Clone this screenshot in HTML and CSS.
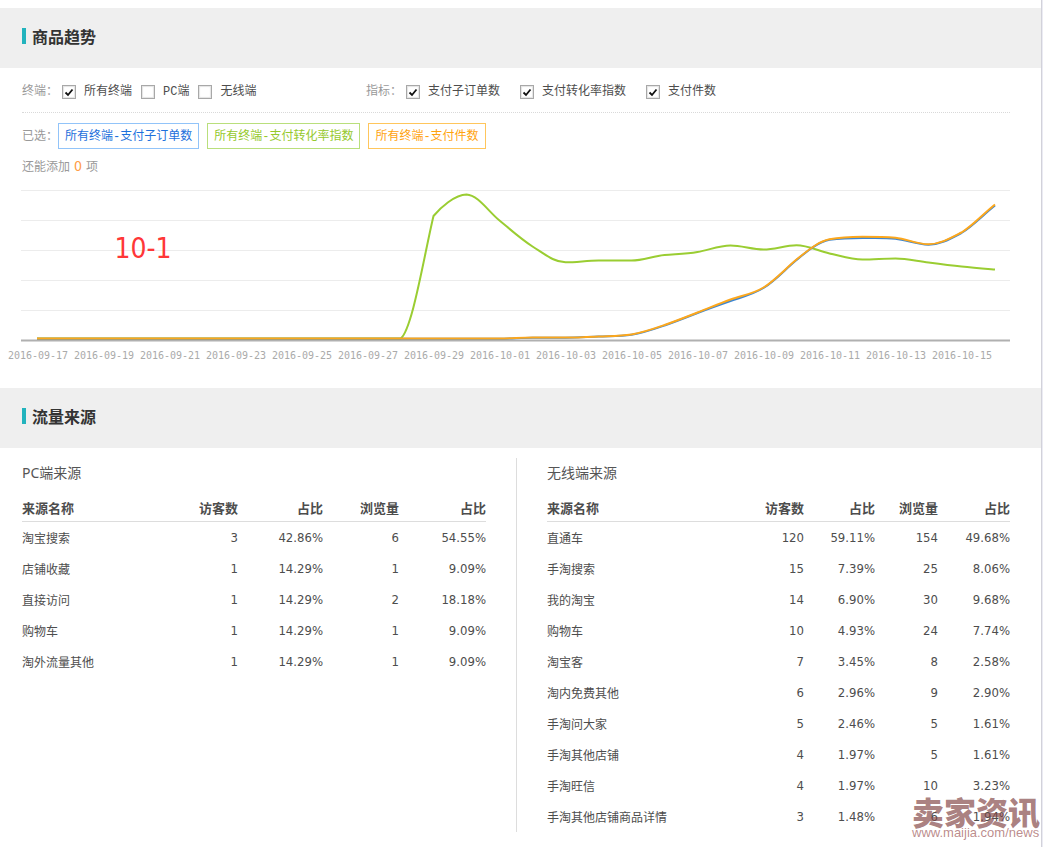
FILE: index.html
```html
<!DOCTYPE html>
<html lang="zh-CN">
<head>
<meta charset="utf-8">
<title>商品趋势</title>
<link rel="stylesheet" href="styles.css">
</head>
<body>
<main class="page">
  <section class="trend">
    <header class="section-head"><h2 class="section-title">商品趋势</h2></header>
    <div class="filters">
      <div class="filter-row">
        <fieldset class="group group-terminal">
          <legend class="group-label">终端：</legend>
          <label class="check"><input type="checkbox" checked>所有终端</label>
          <label class="check"><input type="checkbox">PC端</label>
          <label class="check"><input type="checkbox">无线端</label>
        </fieldset>
        <fieldset class="group group-metric">
          <legend class="group-label">指标：</legend>
          <label class="check"><input type="checkbox" checked>支付子订单数</label>
          <label class="check"><input type="checkbox" checked>支付转化率指数</label>
          <label class="check"><input type="checkbox" checked>支付件数</label>
        </fieldset>
      </div>
      <div class="selected-row">
        <span class="selected-label">已选：</span>
        <div class="tags">
          <span class="tag tag-blue">所有终端-支付子订单数</span>
          <span class="tag tag-green">所有终端-支付转化率指数</span>
          <span class="tag tag-orange">所有终端-支付件数</span>
        </div>
      </div>
      <p class="remaining">还能添加<span class="count">0</span>项</p>
    </div>
    <svg class="chart" viewBox="0 185 1041 183" role="img" aria-label="商品趋势图">
      <path class="grid" d="M21 190.500H1010M21 220.500H1010M21 250.500H1010M21 280.500H1010M21 310.500H1010"/>
      <path class="axis" d="M21 340.500H1010"/>
      <path class="line line-green" d="M37 338.500H400.500C412 331 424 256 433.500 216C440 208 455 194.500 466.500 194.500C478 195 488 211 499.500 220.500C511 230 521 239 532.500 246.500C546 255 554 262 565.500 262.300C577 262.300 587 260.500 598.500 260.500H631.500C643 260.500 653 256 664.500 255C676 254 686 254 697.500 252C709 250 719 245.500 730.500 245.500C742 245.500 752 249.500 763.500 249.500C775 249.500 785 245.300 796.500 245.300C808 245.300 818 251 829.500 253.500C841 256 851 259.500 862.500 259.500C874 259.500 884 258.500 895.500 258.500C907 258.500 917 261.200 928.500 262.500C940 264 950 265.300 961.500 266.500C973 267.700 983 268.500 995 269.500"/>
      <path class="line line-blue" d="M37 338.700H499.500C511 338.700 521 337.700 532.500 337.700H565.500C577 337.700 587 337 598.500 336.600C610 336 620 336.500 631.500 334.700C643 333 653 329.500 664.500 325.500C676 321.500 686 317.500 697.500 313C709 308.500 719 305 730.500 301C742 297 752 295 763.500 288C775 281 785 269.500 796.500 260C808 250.500 818 242 829.500 239.800C841 238.300 851 238 862.500 238C874 238 884 237.500 895.500 238.700C907 240 917 244.700 928.500 244.700C940 244.700 950 239 961.500 233C973 226 983 215 995 205.500"/>
      <path class="line line-orange" d="M37 338.500H499.500C511 338.500 521 337.500 532.500 337.500H565.500C577 337.500 587 337 598.500 336.500C610 336 620 336.300 631.500 334.500C643 332.500 653 329 664.500 325C676 321 686 317 697.500 312.500C709 308 719 303.700 730.500 299.500C742 295.300 752 294.500 763.500 287.500C775 280.500 785 269 796.500 259.500C808 250.500 818 241.500 829.500 239.300C841 237 851 236.700 862.500 236.700C874 236.700 884 236.700 895.500 237.700C907 239 917 244.300 928.500 244.300C940 244.300 950 238.500 961.500 232.500C973 225.500 983 214 995 204.500"/>
      <g class="dates">
        <text x="38" y="359">2016-09-17</text>
        <text x="104" y="359">2016-09-19</text>
        <text x="170" y="359">2016-09-21</text>
        <text x="236" y="359">2016-09-23</text>
        <text x="302" y="359">2016-09-25</text>
        <text x="368" y="359">2016-09-27</text>
        <text x="434" y="359">2016-09-29</text>
        <text x="500" y="359">2016-10-01</text>
        <text x="566" y="359">2016-10-03</text>
        <text x="632" y="359">2016-10-05</text>
        <text x="698" y="359">2016-10-07</text>
        <text x="764" y="359">2016-10-09</text>
        <text x="830" y="359">2016-10-11</text>
        <text x="896" y="359">2016-10-13</text>
        <text x="962" y="359">2016-10-15</text>
      </g>
      <text class="note" x="143" y="258">10-1</text>
    </svg>
  </section>

  <section class="sources">
    <header class="section-head"><h2 class="section-title">流量来源</h2></header>
    <div class="columns">
      <div class="column column-pc">
        <h3 class="column-title">PC端来源</h3>
        <table class="table">
          <colgroup><col><col class="w-visitors"><col class="w-share"><col class="w-views"><col class="w-last"></colgroup>
          <thead><tr><th>来源名称</th><th>访客数</th><th>占比</th><th>浏览量</th><th>占比</th></tr></thead>
          <tbody>
            <tr><td>淘宝搜索</td><td>3</td><td>42.86%</td><td>6</td><td>54.55%</td></tr>
            <tr><td>店铺收藏</td><td>1</td><td>14.29%</td><td>1</td><td>9.09%</td></tr>
            <tr><td>直接访问</td><td>1</td><td>14.29%</td><td>2</td><td>18.18%</td></tr>
            <tr><td>购物车</td><td>1</td><td>14.29%</td><td>1</td><td>9.09%</td></tr>
            <tr><td>淘外流量其他</td><td>1</td><td>14.29%</td><td>1</td><td>9.09%</td></tr>
          </tbody>
        </table>
      </div>
      <div class="column column-mobile">
        <h3 class="column-title">无线端来源</h3>
        <table class="table">
          <colgroup><col><col class="w-visitors"><col class="w-share"><col class="w-views"><col class="w-last"></colgroup>
          <thead><tr><th>来源名称</th><th>访客数</th><th>占比</th><th>浏览量</th><th>占比</th></tr></thead>
          <tbody>
            <tr><td>直通车</td><td>120</td><td>59.11%</td><td>154</td><td>49.68%</td></tr>
            <tr><td>手淘搜索</td><td>15</td><td>7.39%</td><td>25</td><td>8.06%</td></tr>
            <tr><td>我的淘宝</td><td>14</td><td>6.90%</td><td>30</td><td>9.68%</td></tr>
            <tr><td>购物车</td><td>10</td><td>4.93%</td><td>24</td><td>7.74%</td></tr>
            <tr><td>淘宝客</td><td>7</td><td>3.45%</td><td>8</td><td>2.58%</td></tr>
            <tr><td>淘内免费其他</td><td>6</td><td>2.96%</td><td>9</td><td>2.90%</td></tr>
            <tr><td>手淘问大家</td><td>5</td><td>2.46%</td><td>5</td><td>1.61%</td></tr>
            <tr><td>手淘其他店铺</td><td>4</td><td>1.97%</td><td>5</td><td>1.61%</td></tr>
            <tr><td>手淘旺信</td><td>4</td><td>1.97%</td><td>10</td><td>3.23%</td></tr>
            <tr><td>手淘其他店铺商品详情</td><td>3</td><td>1.48%</td><td>6</td><td>1.94%</td></tr>
          </tbody>
        </table>
      </div>
    </div>
  </section>
</main>
<div class="watermark">
  <span class="watermark-name">卖家资讯</span>
  <span class="watermark-url">www.maijia.com/news</span>
</div>
</body>
</html>
```
FILE: styles.css
```css
* {
  box-sizing: border-box;
}

body {
  position: relative;
  margin: 0;
  padding-right: 1px;
  background: #ebebf3;
  color: #4d4d4d;
  font: 12px/16px "Liberation Mono", "Noto Sans CJK SC", monospace;
}

.page {
  min-height: 100vh;
  padding: 8px 0 15px;
  border-right: 1px solid #d2d2da;
  background: #fff;
}

.section-head {
  height: 60px;
  padding: 20px 22px;
  background: #efefef;
}

.section-title {
  margin: 0;
  padding-left: 6px;
  border-left: 4px solid #22b3bd;
  color: #333;
  font: bold 16px/16px "Noto Sans CJK SC", sans-serif;
}

.filters {
  padding: 0 31px 0 22px;
}

.filter-row {
  display: flex;
  height: 45px;
  padding-top: 16px;
  border-bottom: 1px dotted #d9d9d9;
}

.group {
  display: flex;
  align-items: center;
  height: 16px;
  margin: 0;
  padding: 0;
  border: 0;
}

.group-terminal {
  flex: 0 0 344px;
  gap: 9px;
}

.group-metric {
  gap: 20px;
}

.group-label {
  float: left;
  width: 40px;
  margin-right: -9px;
  padding: 0;
  color: #999;
}

.group-metric .group-label {
  margin-right: -20px;
}

.check {
  display: flex;
  align-items: center;
  gap: 8px;
  line-height: 18px;
}

.check input {
  appearance: none;
  width: 14px;
  height: 14px;
  margin: 0;
  border: 1px solid #a8a8a8;
  background: #fff;
  box-shadow: inset 0 0 1px 1px #e4e4e4;
}

.check input:checked {
  background: #fff url("data:image/svg+xml,%3Csvg xmlns='http://www.w3.org/2000/svg' viewBox='0 0 12 12'%3E%3Cpath d='M2.500 6.500L5 9L9.500 3.500' fill='none' stroke='%23111' stroke-width='1.800'/%3E%3C/svg%3E") center / 12px no-repeat;
}

.selected-row {
  display: flex;
  align-items: center;
  padding-top: 10px;
}

.selected-label {
  width: 36px;
  padding-top: 2px;
  color: #999;
}

.tags {
  display: flex;
  gap: 8px;
}

.tag {
  height: 26px;
  padding: 5px 6px 3px;
  border: 1px solid;
}

.tag-blue {
  border-color: #92c4f9;
  color: #1d70dc;
}

.tag-green {
  border-color: #b9df7c;
  color: #96c92c;
}

.tag-orange {
  border-color: #ffc65c;
  color: #ffa310;
}

.remaining {
  margin: 9px 0;
  color: #999;
}

.count {
  margin: 0 4px;
  color: #ff9c45;
  font: 14px/16px "DejaVu Sans Condensed", "DejaVu Sans", sans-serif;
}

.chart {
  display: block;
  width: 100%;
}

.grid {
  stroke: #ececec;
}

.axis {
  stroke: #b0b0b0;
  stroke-width: 2;
}

.line {
  fill: none;
  stroke-width: 2;
}

.line-green {
  stroke: #9acd32;
}

.line-blue {
  stroke: #3c86d2;
}

.line-orange {
  stroke: #fca71d;
}

.dates {
  fill: #aaa;
  font: 10px "DejaVu Sans Mono", monospace;
  text-anchor: middle;
}

.note {
  fill: #ff3737;
  font: 28px "DejaVu Sans Condensed", "DejaVu Sans", sans-serif;
  text-anchor: middle;
}

.sources {
  padding-top: 20px;
}

.columns {
  display: grid;
  grid-template-columns: 1fr 1fr;
  padding: 10px 31px 0 22px;
}

.column-pc {
  padding-right: 30px;
}

.column-mobile {
  padding-left: 30px;
  border-left: 1px solid #ddd;
}

.column-title {
  margin: 0;
  padding: 5px 0 15px;
  color: #555;
  font: 14px/20px "Noto Sans", "Noto Sans CJK SC", sans-serif;
}

.table {
  width: 100%;
  border-collapse: separate;
  border-spacing: 0;
  table-layout: fixed;
}

.table th,
.table td {
  padding: 0;
  text-align: right;
  white-space: nowrap;
}

.table th {
  height: 24px;
  padding-bottom: 4px;
  border-bottom: 1px solid #ddd;
  font: bold 13px/18px "Noto Sans CJK SC", sans-serif;
}

.table td {
  height: 31px;
  font: 13px/18px "DejaVu Sans Condensed", "DejaVu Sans", sans-serif;
}

.table th:first-child,
.table td:first-child {
  text-align: left;
}

.table td:first-child {
  font: 12px/18px "Noto Sans CJK SC", sans-serif;
}

.column-pc .w-visitors {
  width: 50px;
}

.column-pc .w-share {
  width: 85px;
}

.column-pc .w-views {
  width: 76px;
}

.column-pc .w-last {
  width: 87px;
}

.column-mobile .w-visitors {
  width: 50px;
}

.column-mobile .w-share {
  width: 71px;
}

.column-mobile .w-views {
  width: 63px;
}

.column-mobile .w-last {
  width: 72px;
}

.watermark {
  position: absolute;
  right: 0;
  bottom: 6px;
  display: flex;
  flex-direction: column;
  width: 131px;
  color: rgba(128, 66, 66, 0.68);
  white-space: nowrap;
}

.watermark-name {
  font: 900 32px/28px "Noto Sans CJK SC", sans-serif;
}

.watermark-url {
  color: rgba(150, 75, 75, 0.65);
  font: 13px/16px "Liberation Sans", sans-serif;
}
```
